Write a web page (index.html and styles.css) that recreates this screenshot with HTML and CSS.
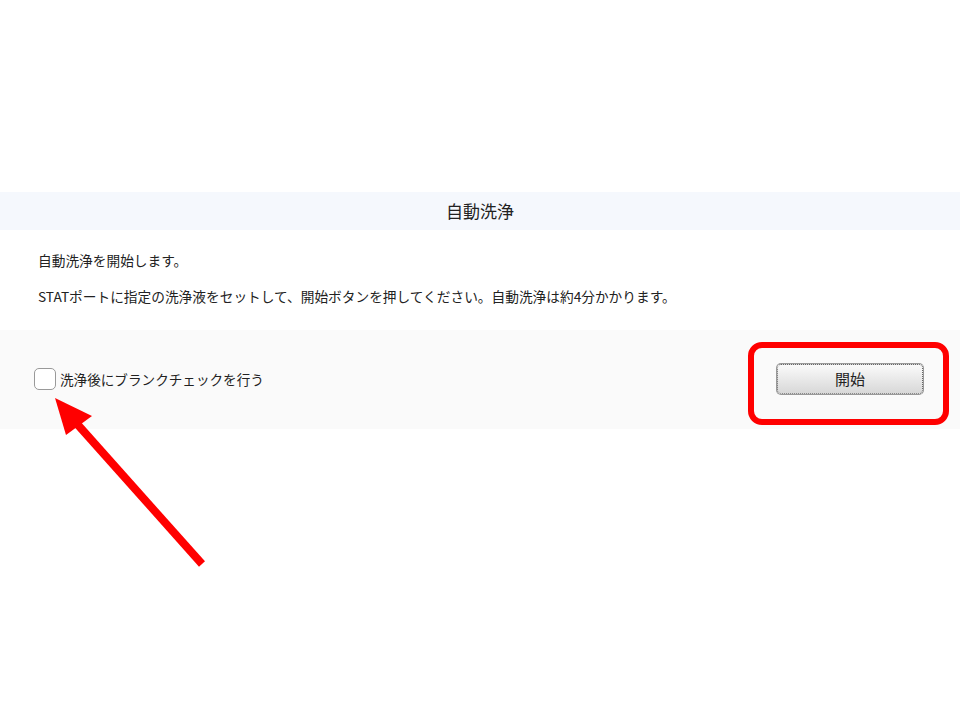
FILE: index.html
```html
<!DOCTYPE html>
<html lang="ja">
<head>
  <meta charset="UTF-8">
  <title>自動洗浄</title>
  <link rel="stylesheet" href="styles.css">
</head>
<body>
  <div class="page">
    <div class="dialog">
      <div class="dialog-title">自動洗浄</div>
      <div class="dialog-body">
        <p>自動洗浄を開始します。</p>
        <p>STATポートに指定の洗浄液をセットして、開始ボタンを押してください。自動洗浄は約4分かかります。</p>
      </div>
      <div class="dialog-footer">
        <label class="check">
          <span class="check-box"></span>
          <span>洗浄後にブランクチェックを行う</span>
        </label>
        <button class="start-btn">開始</button>
      </div>
    </div>

    <div class="highlight"></div>
    <svg class="arrow" width="200" height="200" viewBox="0 0 200 200">
      <line x1="152" y1="174" x2="20" y2="26" stroke="#ff0000" stroke-width="8" />
      <polygon points="5,8 42,26 16,45" fill="#ff0000" />
    </svg>
  </div>
</body>
</html>
```

FILE: styles.css
```css
* {
  box-sizing: border-box;
}

body {
  margin: 0;
  background: #fff;
  font-family: "Noto Sans CJK JP", "Noto Sans", sans-serif;
  color: #222;
}

.page {
  position: relative;
  width: 960px;
  height: 720px;
  padding-top: 192px;
}

.dialog-title {
  height: 38px;
  line-height: 38px;
  background: #f5f8fd;
  text-align: center;
  font-size: 17px;
}

.dialog-body {
  padding: 21px 38px 7px;
  font-size: 13.7px;
}

.dialog-body p {
  margin: 0 0 17px;
  line-height: 19px;
}

.dialog-footer {
  height: 99px;
  background: #fafafa;
  display: flex;
  align-items: center;
  justify-content: space-between;
  padding: 0 37px 0 34px;
}

.check {
  display: flex;
  align-items: center;
  gap: 4px;
  font-size: 13.6px;
  margin-top: -2px;
}

.check-box {
  width: 22px;
  height: 22px;
  border: 1px solid #999;
  border-radius: 5px;
  background: #fff;
}

.start-btn {
  width: 146px;
  height: 30px;
  font-family: inherit;
  font-size: 15px;
  color: #222;
  border: 1px dotted #666;
  border-radius: 4px;
  background: linear-gradient(#fafafa, #d8d8d8);
  box-shadow: 0 0 0 1px #999;
  margin-top: -2px;
}

.highlight {
  position: absolute;
  left: 748px;
  top: 342px;
  width: 201px;
  height: 83px;
  border: 6px solid #ff0000;
  border-radius: 14px;
}

.arrow {
  position: absolute;
  left: 50px;
  top: 390px;
}
```
